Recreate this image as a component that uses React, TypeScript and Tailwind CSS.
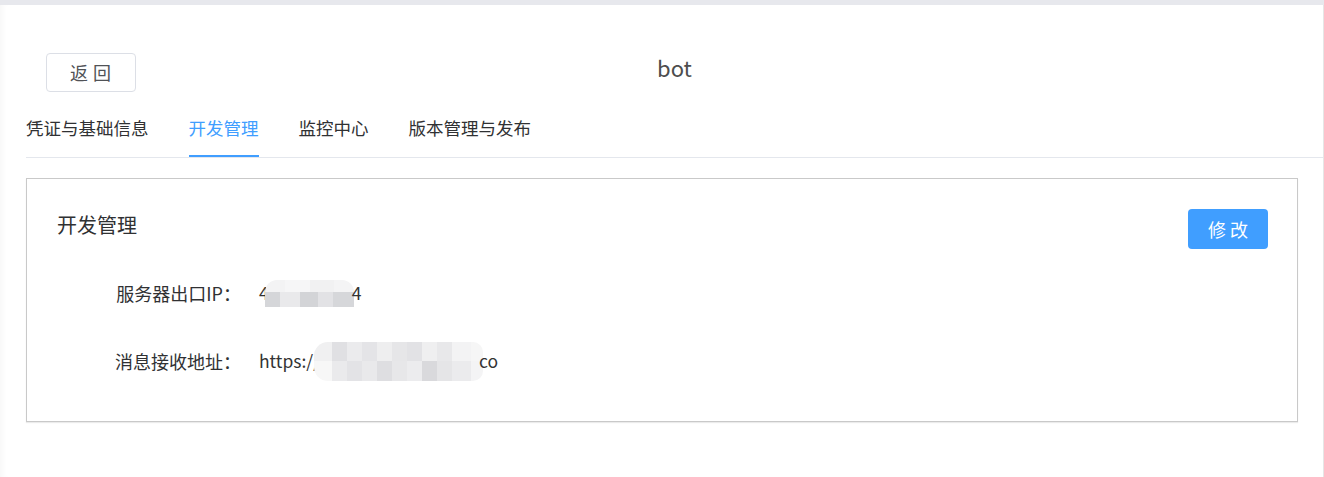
import React from "react";

const FONT = { fontFamily: '"Noto Sans CJK SC", "Noto Sans", sans-serif' };

const TABS = ["凭证与基础信息", "开发管理", "监控中心", "版本管理与发布"];

// pixelated privacy blur, drawn as blocks
function Mosaic({ top, bottom, topClass, bottomClass, className }: {
  top: [number, string][];
  bottom: [number, string][];
  topClass: string;
  bottomClass: string;
  className: string;
}) {
  return (
    <span className={`inline-flex flex-col overflow-hidden align-middle ${className}`}>
      <span className={`flex ${topClass}`}>
        {top.map(([w, c], i) => (
          <span key={i} className="h-full shrink-0" style={{ width: w, background: c }} />
        ))}
      </span>
      <span className={`flex ${bottomClass}`}>
        {bottom.map(([w, c], i) => (
          <span key={i} className="h-full shrink-0" style={{ width: w, background: c }} />
        ))}
      </span>
    </span>
  );
}

export default function App() {
  return (
    <div className="h-[477px] w-full overflow-hidden bg-[#e7e8ed] pt-[5px]" style={FONT}>
      <div className="h-full border-r border-[#e6e6e6] bg-white pl-[26px] shadow-[inset_6px_0_6px_-4px_rgba(0,0,0,0.04)]">
        {/* header */}
        <div className="grid grid-cols-[1fr_auto_1fr] items-start pt-[48px]">
          <div>
            <button className="ml-[20px] flex h-[39px] w-[90px] items-center justify-center rounded-[4px] border border-[#dcdfe6] pl-[4px] text-[18px] tracking-[5px] text-[#505256]">
              返回
            </button>
          </div>
          <h1 className="-mt-[1px] text-[22px] leading-[30px] text-[#4d4d4d]">bot</h1>
          <div />
        </div>

        {/* tabs */}
        <div className="mt-[15px] flex border-b border-[#e4e7ed]">
          {TABS.map((t, i) => (
            <div
              key={t}
              className={`relative flex h-[50px] items-center pb-[7px] text-[17.5px] ${i === 0 ? "pr-[20px]" : "px-[20px]"} ${i === 1 ? "text-[#409eff]" : "text-[#303133]"}`}
            >
              {t}
              {i === 1 && <span className="absolute bottom-0 left-[20px] right-[20px] h-[2px] bg-[#409eff]" />}
            </div>
          ))}
        </div>

        {/* card */}
        <div className="mr-[25px] mt-[20px] h-[244px] border border-[#c9c9c9] shadow-[0_1px_1px_rgba(0,0,0,0.08)]">
          <div className="flex items-start justify-between pl-[30px] pr-[29px] pt-[30px]">
            <h2 className="mt-[2px] text-[20px] leading-[28px] text-[#303133]">开发管理</h2>
            <button className="flex h-[40px] w-[80px] items-center justify-center rounded-[4px] bg-[#409eff] pl-[4px] text-[18px] tracking-[4px] text-white">
              修改
            </button>
          </div>

          <div className="mt-[26px] flex h-[36px] items-center text-[18px]">
            <span className="w-[214px] text-right text-[#303133]">服务器出口IP：</span>
            <span className="ml-[18px] flex items-center text-[17.5px] text-[#333]">
              4
              <Mosaic
                className="-ml-[4px] -mr-[2px] h-[27px] w-[89px]"
                topClass="h-[12px] overflow-hidden rounded-t-[12px]"
                bottomClass="h-[15px]"
                top={[[20, "#f3f3f4"], [25, "#f6f6f7"], [24, "#f1f1f2"], [20, "#f4f4f5"]]}
                bottom={[[15, "#d5d6d9"], [20, "#e9e9eb"], [18, "#d3d4d7"], [15, "#e2e2e5"], [21, "#d6d7da"]]}
              />
              4
            </span>
          </div>

          <div className="mt-[32px] flex h-[36px] items-center text-[18px]">
            <span className="w-[214px] text-right text-[#303133]">消息接收地址：</span>
            <span className="ml-[18px] flex items-center text-[17.5px] text-[#333]">
              https://
              <Mosaic
                className="-ml-[6px] -mr-[4px] h-[39px] w-[169px] rounded-l-[14px] rounded-r-[10px]"
                topClass="h-[19px]"
                bottomClass="h-[20px]"
                top={[
                  [18, "#f0f0f1"], [15, "#e0e0e3"], [15, "#ebebed"], [15, "#e4e4e7"], [15, "#eeeeef"],
                  [15, "#e6e6e8"], [15, "#e2e2e5"], [15, "#efeff0"], [15, "#e8e8ea"], [19, "#f3f3f4"], [12, "#f6f6f6"],
                ]}
                bottom={[
                  [18, "#f7f7f7"], [15, "#eaeaec"], [15, "#e3e3e6"], [15, "#e9e9eb"], [15, "#dedee1"],
                  [15, "#e7e7e9"], [15, "#ececee"], [15, "#d9d9dc"], [15, "#e5e5e7"], [19, "#ebebed"], [12, "#f4f4f5"],
                ]}
              />
              co
            </span>
          </div>
        </div>
      </div>
    </div>
  );
}
